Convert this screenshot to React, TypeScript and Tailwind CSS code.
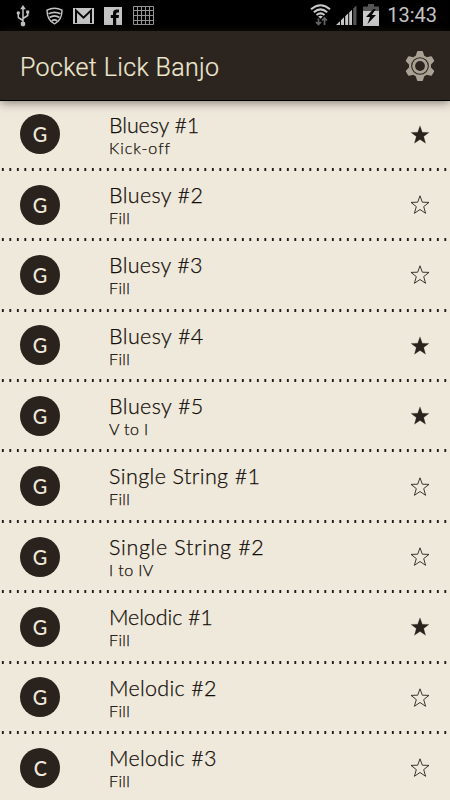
import React from 'react';

interface Lick {
  keyName: string;
  title: string;
  kind: string;
  starred: boolean;
  spacing: string;
}

const LICKS: Lick[] = [
  { keyName: 'G', title: 'Bluesy #1', kind: 'Kick-off', starred: true, spacing: 'tracking-[-0.1px]' },
  { keyName: 'G', title: 'Bluesy #2', kind: 'Fill', starred: false, spacing: 'tracking-[0.35px]' },
  { keyName: 'G', title: 'Bluesy #3', kind: 'Fill', starred: false, spacing: 'tracking-[0.3px]' },
  { keyName: 'G', title: 'Bluesy #4', kind: 'Fill', starred: true, spacing: 'tracking-[0.4px]' },
  { keyName: 'G', title: 'Bluesy #5', kind: 'V to I', starred: true, spacing: 'tracking-[0.4px]' },
  { keyName: 'G', title: 'Single String #1', kind: 'Fill', starred: false, spacing: 'tracking-[0.4px]' },
  { keyName: 'G', title: 'Single String #2', kind: 'I to IV', starred: false, spacing: 'tracking-[0.65px]' },
  { keyName: 'G', title: 'Melodic #1', kind: 'Fill', starred: true, spacing: 'tracking-[-0.1px]' },
  { keyName: 'G', title: 'Melodic #2', kind: 'Fill', starred: false, spacing: 'tracking-[0.3px]' },
  { keyName: 'C', title: 'Melodic #3', kind: 'Fill', starred: false, spacing: 'tracking-[0.3px]' },
];

function UsbIcon() {
  return (
    <svg width="14" height="22" viewBox="0 0 14 22" fill="none" stroke="#c4c4c4" strokeWidth="1.5">
      <path d="M7 3v15M7 15.5L2.3 12.5V9M7 13.5l4.7-3V8" />
      <path d="M7 0l2.8 4.2H4.2z" fill="#c4c4c4" stroke="none" />
      <circle cx="7" cy="19" r="2.4" fill="#c4c4c4" stroke="none" />
      <circle cx="2.3" cy="8" r="1.7" fill="#c4c4c4" stroke="none" />
      <path d="M10.2 5.5h3v3h-3z" fill="#c4c4c4" stroke="none" />
    </svg>
  );
}

function ShieldIcon() {
  return (
    <svg width="17" height="18" viewBox="0 0 17 18" fill="none" stroke="#c4c4c4" strokeWidth="1.4">
      <path d="M1 3.2Q8.5-.8 16 3.2C16 10 13.6 14.4 8.5 16.8 3.4 14.4 1 10 1 3.2z" />
      <path d="M2.5 6.8q6-3 12 0M3.5 10.5q5-3.4 10 0M5.8 14q2.7-2.4 5.4 0" strokeWidth="1.7" />
    </svg>
  );
}

function MailIcon() {
  return (
    <svg width="21" height="16" viewBox="0 0 21 16">
      <path d="M0 0h21v16H0z" fill="#c4c4c4" />
      <path d="M3 15V2.5l7.5 7.2L18 2.5V15" fill="none" stroke="#080808" strokeWidth="2" />
    </svg>
  );
}

function FacebookIcon() {
  return (
    <svg width="18" height="18" viewBox="0 0 18 18">
      <path d="M0 0h18v18H0z" fill="#c4c4c4" />
      <path d="M9 18v-7H6.8V8H9V6.3Q9 2.6 12.8 2.6H15v3h-1.4q-1.4 0-1.4 1.3V8H15l-.4 3h-2.4v7z" fill="#080808" />
    </svg>
  );
}

function GridIcon() {
  return (
    <svg width="21" height="19" viewBox="0 0 21 19" fill="none" stroke="#949494">
      <path d="M.5.5h20v18H.5zM4.5 0v19M8.5 0v19M12.5 0v19M16.5 0v19M0 4.5h21M0 9.5h21M0 14.5h21" />
    </svg>
  );
}

function WifiIcon() {
  return (
    <svg width="21" height="22" viewBox="0 0 21 22" fill="none" stroke="#c8c8c8" strokeWidth="2">
      <path d="M1 5.2Q10.5-2.8 20 5.2M3.8 8.2q6.7-5.6 13.4 0M6.5 11q4-3.2 8 0" />
      <path d="M8.2 12.5q2.3-1.6 4.6 0L10.5 14.8z" fill="#c8c8c8" stroke="none" />
      <path d="M8.5 14.5v6M6 18l2.5 2.6L11 18M14.5 21v-7M12 16.5l2.5-2.6 2.5 2.6" stroke="#666" strokeWidth="1.7" />
    </svg>
  );
}

function SignalIcon() {
  return (
    <svg width="21" height="20" viewBox="0 0 21 20">
      <path d="M0 20l4-3.8V20zM5 15.2l3-2.9V20H5zM9.2 11.2l3-2.9V20h-3zM13.2 7.4l2.8-2.7V20h-2.8z" fill="#cacaca" />
      <path d="M17.2 3.6L20.5.4V20h-3.3z" fill="#555" />
    </svg>
  );
}

function BatteryIcon() {
  return (
    <svg width="16" height="22" viewBox="0 0 16 22">
      <path d="M5 0h6v2.5h5V7H0V2.5h5z" fill="#555" />
      <path d="M0 7h16v15H0z" fill="#cacaca" />
      <path d="M10.500 5L3 13h4l-2.500 7 8.500-9H8.800l4-6z" fill="#050505" />
    </svg>
  );
}

function GearIcon() {
  return (
    <svg width="30" height="30" viewBox="-15 -15 30 30">
      <g fill="#aaa294">
        <circle r="11" />
        {[0, 60, 120, 180, 240, 300].map((angle) => (
          <path key={angle} d="M-4.3-10l1.3-4.3q.2-.7.9-.7h4.2q.7 0 .9.7L4.300-10z" transform={`rotate(${angle})`} />
        ))}
      </g>
      <circle r="8.3" fill="none" stroke="#2c241f" strokeWidth="1.1" />
      <circle r="4.9" fill="#2c241f" />
    </svg>
  );
}

function Star({ filled }: { filled: boolean }) {
  return (
    <svg width="20" height="20" viewBox="0 0 20 20" className="mt-[10.5px] ml-auto">
      <path
        d="M10 .8l2.300 6.400 6.700.2-5.300 4.200 1.900 6.700-5.600-3.800-5.600 3.800 1.900-6.700L1 7.400l6.700-.2z"
        fill={filled ? '#2a221d' : 'none'}
        stroke="#2a221d"
        strokeWidth={filled ? 0.2 : 0.9}
      />
    </svg>
  );
}

function LickRow({ lick }: { lick: Lick }) {
  return (
    <li className="relative flex h-[70.4px] shrink-0 items-start px-5 pt-[14.2px]">
      <div className="flex size-10 shrink-0 items-center justify-center rounded-full bg-[#2a221d] text-[#f0e9db]">
        <span className="scale-x-90 font-['Lato',sans-serif] text-[22px] leading-none font-medium">{lick.keyName}</span>
      </div>
      <div className="-mt-[0.7px] ml-[49px] flex flex-col font-['Lato',sans-serif] font-light whitespace-nowrap text-[#140e0a] [-webkit-text-stroke:0.25px_#140e0a]">
        <span className={`text-[21.5px] leading-[23px] ${lick.spacing}`}>{lick.title}</span>
        <span className={`text-[16px] leading-[21px] ${lick.kind === 'Kick-off' ? 'tracking-[1px]' : 'tracking-[0.4px]'}`}>{lick.kind}</span>
      </div>
      <Star filled={lick.starred} />
      {/* dotted divider */}
      <div className="absolute inset-x-0 bottom-[-0.4px] h-[3px] bg-[linear-gradient(90deg,transparent_1.5px,#211a16_1.5px,#211a16_3.6px,transparent_3.6px)] bg-[length:7.5px_3px]" />
    </li>
  );
}

export default function App() {
  return (
    <div className="flex h-[800px] w-[450px] flex-col overflow-hidden bg-[#efe9dc] font-['Roboto',sans-serif]">
      <div className="flex h-[31px] shrink-0 items-center bg-black pr-[13px] pl-4">
        <UsbIcon />
        <div className="ml-4"><ShieldIcon /></div>
        <div className="ml-[10px]"><MailIcon /></div>
        <div className="ml-[10px]"><FacebookIcon /></div>
        <div className="ml-[11px] -mt-px"><GridIcon /></div>
        <div className="ml-auto flex items-center">
          <div className="-mt-px"><WifiIcon /></div>
          <div className="ml-[5px] -mt-px"><SignalIcon /></div>
          <div className="ml-[6px] -mt-px"><BatteryIcon /></div>
          <span className="-mt-px ml-[8px] text-[20px] leading-none font-normal text-[#c4c4c4]">13:43</span>
        </div>
      </div>
      <header className="z-10 flex h-[70px] shrink-0 items-center justify-between border-b border-black bg-[#2c241f] pr-[15px] pl-5 shadow-[0_1px_10px_rgba(40,32,25,0.6)]">
        <h1 className="pt-[3px] text-[25px] leading-none font-light tracking-[0.35px] text-[#eee8cf] [-webkit-text-stroke:0.2px_#eee8cf]">Pocket Lick Banjo</h1>
        <GearIcon />
      </header>
      <ul className="-mt-px flex flex-col">
        {LICKS.map((lick) => (
          <LickRow key={lick.title} lick={lick} />
        ))}
      </ul>
    </div>
  );
}
